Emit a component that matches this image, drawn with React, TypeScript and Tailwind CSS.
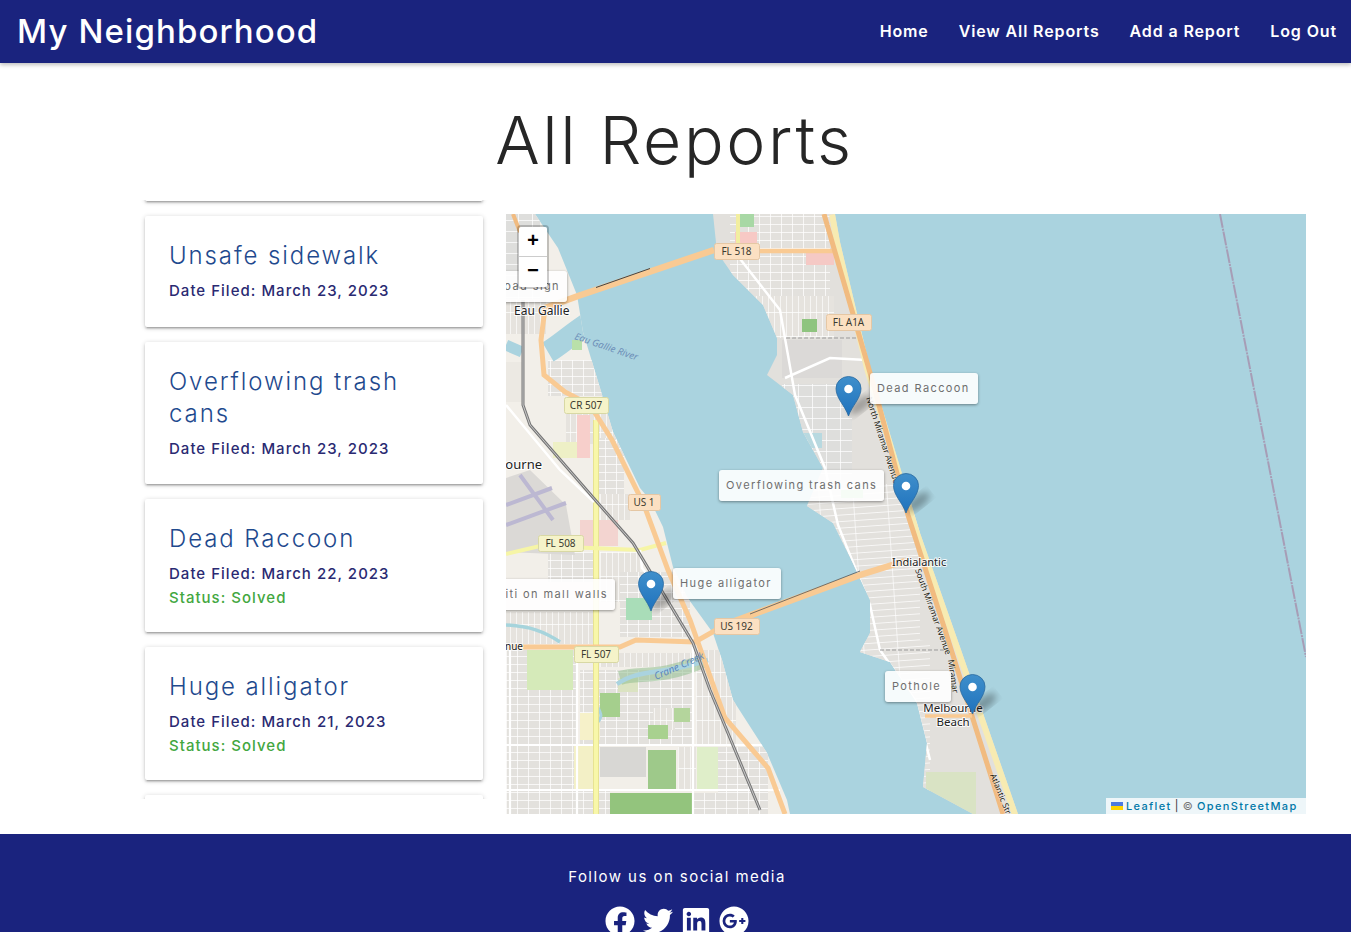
import { FaFacebook, FaTwitter, FaLinkedin, FaGooglePlus } from "react-icons/fa";

const FONT = "font-['Inter','Noto_Sans',sans-serif]";

type Report = { title: string[]; date: string; solved?: boolean };
const reports: Report[] = [
  { title: ["Unsafe sidewalk"], date: "Date Filed: March 23, 2023" },
  { title: ["Overflowing trash", "cans"], date: "Date Filed: March 23, 2023" },
  { title: ["Dead Raccoon"], date: "Date Filed: March 22, 2023", solved: true },
  { title: ["Huge alligator"], date: "Date Filed: March 21, 2023", solved: true },
];

const CARD_SHADOW = "shadow-[0_2px_2px_0_rgba(0,0,0,0.14),0_3px_1px_-2px_rgba(0,0,0,0.12),0_1px_5px_0_rgba(0,0,0,0.2)]";

function Card({ r }: { r: Report }) {
  return (
    <div className={`bg-white rounded-[2px] p-6 ${CARD_SHADOW}`}>
      <div className="text-[24px] leading-[32px] font-light tracking-[1.9px] text-[#1f4a8e]">
        {r.title.map((t) => (
          <div key={t}>{t}</div>
        ))}
      </div>
      <div className="mt-[8px] text-[15px] leading-[22.5px] font-medium tracking-[1.02px] text-[#2a2a72]">{r.date}</div>
      {r.solved && <div className="mt-px -mb-px text-[15px] leading-[22.5px] font-medium tracking-[1.02px] text-[#43a73f]">Status: Solved</div>}
    </div>
  );
}

const mainland = "506,214 535,214 558,248 577,295 583,332 600,388 613,432 640,488 650,500 663,527 673,567 687,597 713,633 722,660 733,700 767,753 787,800 790,814 506,814";
const island = "713,214 717,252 733,275 763,305 777,338 777,355 767,375 793,395 803,432 823,468 807,506 833,523 850,557 870,600 870,633 860,652 890,662 917,703 927,743 923,787 973,814 1018,814 960,647 920,533 870,368 840,242 835,214";
const east = "835,214 840,242 870,368 920,533 960,647 1018,814";

function Shield({ x, y, w, t, yellow }: { x: number; y: number; w: number; t: string; yellow?: boolean }) {
  return (
    <g>
      <rect x={x + 0.5} y={y + 0.5} width={w} height={16} rx={2} fill={yellow ? "#f5f3c9" : "#fbe0c2"} stroke={yellow ? "#d8d8a4" : "#e5c7a4"} />
      <text x={x + w / 2} y={y + 12.2} textAnchor="middle" fontSize={10} fill="#3b3b30" fontFamily="'Noto Sans',sans-serif">{t}</text>
    </g>
  );
}

function Label({ x, y, t, anchor = "start", size = 12 }: { x: number; y: number; t: string; anchor?: "start" | "middle" | "end"; size?: number }) {
  return (
    <text x={x} y={y} textAnchor={anchor} fontSize={size} fill="#222" stroke="#fff" strokeWidth={2} paintOrder="stroke" strokeOpacity={0.85} fontFamily="'Noto Sans',sans-serif">{t}</text>
  );
}

function RoadName({ x, y, a, t }: { x: number; y: number; a: number; t: string }) {
  return (
    <text transform={`translate(${x} ${y}) rotate(${a})`} fontSize={8.4} fill="#201a10" stroke="#fff" strokeWidth={1} strokeOpacity={0.4} paintOrder="stroke" fontFamily="'Noto Sans',sans-serif">{t}</text>
  );
}

function Pin({ x, tip }: { x: number; tip: number }) {
  return (
    <g transform={`translate(${x - 12.5} ${tip - 39.5})`}>
      <path d="M12.5 39.5 C9 29 0 22 0 12 A12.5 12 0 0 1 25 12 C25 22 16 29 12.5 39.5 Z" fill="url(#pin)" stroke="#2a6a9f" strokeWidth={0.8} />
      <circle cx={12.5} cy={12.5} r={4.3} fill="#fff" />
    </g>
  );
}

function Shadow({ x, tip }: { x: number; tip: number }) {
  return <ellipse cx={x + 12} cy={tip - 11} rx={14} ry={6} fill="#000" opacity={0.3} filter="url(#blur)" transform={`rotate(-38 ${x + 12} ${tip - 11})`} />;
}

const Rects = ({ items }: { items: [number, number, number, number, string][] }) => (
  <>
    {items.map(([x, y, w, h, f], i) => (
      <rect key={i} x={x} y={y} width={w} height={h} fill={f} />
    ))}
  </>
);

function MapDrawing() {
  return (
    <svg viewBox="506 214 800 600" className="absolute inset-0 w-full h-full">
      <defs>
        <linearGradient id="pin" x1="0" y1="0" x2="0" y2="1">
          <stop offset="0" stopColor="#3f8fcb" />
          <stop offset="1" stopColor="#1f72bd" />
        </linearGradient>
        <filter id="blur"><feGaussianBlur stdDeviation="3.5" /></filter>
        <pattern id="gridA" width="11" height="8" patternUnits="userSpaceOnUse">
          <rect width="11" height="8" fill="#e3e1dd" />
          <path d="M0 0H11M0 0V8" stroke="#fff" strokeWidth="1.5" />
        </pattern>
        <pattern id="gridB" width="34" height="6.5" patternUnits="userSpaceOnUse" patternTransform="rotate(-4)">
          <rect width="34" height="6.5" fill="#e3e1dd" />
          <path d="M0 0H34M0 0V6.5" stroke="#fff" strokeWidth="1.3" />
        </pattern>
        <pattern id="gridC" width="14" height="11" patternUnits="userSpaceOnUse">
          <rect width="14" height="11" fill="#dededc" />
          <path d="M0 0H14M0 0V11" stroke="#fff" strokeWidth="1.5" />
        </pattern>
        <pattern id="gridD" width="6" height="24" patternUnits="userSpaceOnUse">
          <rect width="6" height="24" fill="#e6e3de" />
          <path d="M0 0H6M0 0V24" stroke="#fff" strokeWidth="1.3" />
        </pattern>
        <clipPath id="mainClip"><polygon points={mainland} /></clipPath>
        <clipPath id="islandClip"><polygon points={island} /></clipPath>
      </defs>

      <rect x="506" y="214" width="800" height="600" fill="#aad3df" />
      <polyline points="1220,214 1306,657" fill="none" stroke="#a79db6" strokeWidth="2" strokeDasharray="14 1 2 1" />

      <polygon points={mainland} fill="#f2efe9" />
      <g clipPath="url(#mainClip)">
        <Rects
          items={[
            [506, 214, 34, 85, "url(#gridC)"],
            [506, 300, 40, 34, "url(#gridD)"],
            [506, 362, 18, 40, "#ece9e3"],
            [548, 360, 56, 36, "url(#gridA)"],
            [566, 414, 50, 30, "url(#gridD)"],
            [577, 415, 13, 43, "#f7cfcb"],
            [553, 442, 24, 16, "#eef0c6"],
            [596, 438, 28, 56, "url(#gridA)"],
            [580, 520, 38, 26, "#f3d4d0"],
            [600, 494, 30, 26, "url(#gridD)"],
            [548, 552, 48, 30, "url(#gridA)"],
            [506, 612, 90, 32, "url(#gridD)"],
            [600, 552, 40, 20, "url(#gridD)"],
            [620, 572, 70, 65, "url(#gridA)"],
            [600, 572, 20, 30, "url(#gridD)"],
            [626, 598, 26, 22, "#a9ddb8"],
            [506, 650, 72, 95, "url(#gridA)"],
            [527, 650, 46, 40, "#d5eab9"],
            [600, 653, 100, 14, "url(#gridD)"],
            [580, 670, 114, 75, "url(#gridA)"],
            [600, 693, 20, 24, "#a5cf8d"],
            [618, 678, 20, 14, "#dbe3c2"],
            [653, 708, 22, 22, "url(#gridD)"],
            [674, 708, 16, 14, "#b4d59c"],
            [648, 725, 20, 14, "#a8d18f"],
            [580, 713, 20, 27, "#f6f1c9"],
            [696, 650, 40, 95, "url(#gridD)"],
            [506, 745, 90, 45, "url(#gridA)"],
            [574, 745, 22, 44, "#f3f0c6"],
            [600, 747, 46, 30, "#d8d7d4"],
            [648, 750, 28, 40, "#9ec98a"],
            [678, 747, 18, 42, "url(#gridD)"],
            [697, 747, 21, 42, "#dfeec9"],
            [718, 747, 50, 70, "url(#gridA)"],
            [506, 790, 104, 24, "url(#gridA)"],
            [610, 793, 84, 21, "#93c47d"],
            [694, 793, 24, 21, "url(#gridA)"],
          ]}
        />
        <path d="M506 478 L530 470 L566 505 L575 555 L506 552 Z" fill="#dbd9d6" />
        <path d="M506 505 L552 488 M506 525 L566 503 M520 475 L553 520" stroke="#bcb8d2" strokeWidth="4" fill="none" />
        <path d="M506 625 C530 626 545 632 560 642" stroke="#a6d4dc" strokeWidth="3.5" fill="none" />
        <path d="M620 678 C640 672 660 680 705 660" stroke="#92c08f" strokeWidth="14" fill="none" opacity="0.55" />
        <path d="M617 684 C640 668 660 676 708 660" stroke="#aad3df" strokeWidth="4.5" fill="none" />
        <path d="M594 700 C600 712 606 716 594 726" stroke="#aad3df" strokeWidth="3" fill="none" />
        <path d="M577 650V814M693 647V814M506 745H770M506 790H780M510 650V814" stroke="#fff" strokeWidth="2.2" fill="none" />
        <path d="M506 345 L522 352" stroke="#aad3df" strokeWidth="11" fill="none" />
        <path d="M590 322 C570 335 560 345 548 352" stroke="#aad3df" strokeWidth="22" fill="none" />
        <rect x="572" y="340" width="10" height="10" fill="#b9e0a9" />
        <polyline points="513,214 520,232" stroke="#f1bb80" strokeWidth="4" fill="none" />
      </g>

      <polygon points={island} fill="#e2e0dc" />
      <g clipPath="url(#islandClip)">
        <Rects
          items={[
            [730, 214, 100, 82, "url(#gridA)"],
            [735, 232, 22, 14, "#f7c9c5"],
            [736, 214, 18, 13, "#a8d8a5"],
            [806, 253, 28, 12, "#f5c9c5"],
            [738, 296, 96, 42, "url(#gridD)"],
            [782, 340, 60, 38, "#dbd9d7"],
            [802, 319, 15, 13, "#8fc47f"],
            [782, 384, 70, 96, "url(#gridC)"],
            [800, 484, 120, 200, "url(#gridB)"],
            [860, 640, 70, 180, "url(#gridB)"],
            [926, 772, 50, 44, "#d9e3c4"],
            [841, 490, 22, 8, "#a8dca8"],
            [788, 433, 34, 15, "#b8d9e0"],
          ]}
        />
        <polyline points="737,255 780,310 795,395 825,468 838,525 870,605 880,650 915,700 930,760" stroke="#fff" strokeWidth="2.5" fill="none" />
        <polyline points="785,378 830,358 866,360" stroke="#fff" strokeWidth="2.5" fill="none" />
        <polyline points="880,650 950,650" stroke="#999" strokeWidth="1" strokeDasharray="4 2" fill="none" />
        <polyline points="786,338 860,338" stroke="#999" strokeWidth="1" strokeDasharray="4 2" fill="none" />
        <polyline points={east} stroke="#f7ebb2" strokeWidth="12" fill="none" />
      </g>

      <polyline points="596,420 596,814" stroke="#e7e393" strokeWidth="6" fill="none" />
      <polyline points="596,420 596,814" stroke="#f8f7a9" strokeWidth="4" fill="none" />
      <polyline points="738,214 738,248" stroke="#f2eea0" strokeWidth="4" fill="none" />
      <polyline points="506,554 540,546 640,550 666,543" stroke="#f6f5a6" strokeWidth="4" fill="none" />
      <polyline points="506,405 560,470 594,502" stroke="#fff" strokeWidth="2.5" fill="none" />
      <polyline points="640,550 642,568 660,590" stroke="#fff" strokeWidth="2.5" fill="none" />
      <polyline points="545,308 541,340 544,375 565,392 590,405 612,440 644,505 668,570 690,620 706,665 725,718 768,768 785,814" stroke="#f9ca93" strokeWidth="5" fill="none" />
      <polyline points="506,647 620,647 636,640 695,642 716,630" stroke="#f9ca93" strokeWidth="5" fill="none" />
      <polyline points="716,628 860,575 905,561" stroke="#f9ca93" strokeWidth="6.5" fill="none" />
      <polyline points="750,618 860,575" stroke="#555" strokeWidth="0.8" fill="none" transform="translate(0 -4)" />
      <polyline points="545,308 578,296 714,250" stroke="#f9ca93" strokeWidth="6.5" fill="none" />
      <polyline points="596,290 650,271" stroke="#444" strokeWidth="1" fill="none" transform="translate(0 -2.5)" />
      <polyline points="758,251 835,251" stroke="#f9ca93" strokeWidth="4.5" fill="none" />
      <polyline points="824,214 875,390 908,515 945,630 972,716 1003,814" stroke="#f1bb80" strokeWidth="5" fill="none" />
      <polyline points="925,716 972,716" stroke="#f9ca93" strokeWidth="3.5" fill="none" />
      <polyline points="523,300 523,405 530,425 597,502 633,543 693,643 710,690 760,810" stroke="#777" strokeWidth="3" fill="none" />
      <polyline points="523,300 523,405 530,425 597,502 633,543 693,643 710,690 760,810" stroke="#ddd" strokeWidth="0.8" fill="none" />

      <text transform="translate(574 339) rotate(19)" fontSize="9.6" fontStyle="italic" fill="#6d8fb8" fontFamily="'Noto Sans',sans-serif">Eau Gallie River</text>
      <text transform="translate(656 680) rotate(-24)" fontSize="10" fontStyle="italic" fill="#5b87bd" fontFamily="'Noto Sans',sans-serif">Crane Creek</text>

      <RoadName x={866} y={398} a={72} t="North Miramar Avenue" />
      <RoadName x={915} y={570} a={70} t="South Miramar Avenue" />
      <RoadName x={948} y={660} a={82} t="Miramar" />
      <RoadName x={990} y={775} a={68} t="Atlantic Street" />

      <Label x={514} y={315} t="Eau Gallie" />
      <Label x={542} y={469} t="Melbourne" anchor="end" size={13} />
      <Label x={892} y={566} t="Indialantic" size={11} />
      <Label x={953} y={712} t="Melbourne" anchor="middle" size={11.5} />
      <Label x={953} y={726} t="Beach" anchor="middle" size={11.5} />
      <Label x={523} y={650} t="Avenue" anchor="end" size={10} />

      <Shield x={714} y={243} w={45} t="FL 518" />
      <Shield x={826} y={314} w={45} t="FL A1A" />
      <Shield x={564} y={397} w={44} t="CR 507" yellow />
      <Shield x={628} y={494} w={32} t="US 1" />
      <Shield x={538} y={535} w={45} t="FL 508" yellow />
      <Shield x={714} y={618} w={45} t="US 192" />
      <Shield x={574} y={646} w={44} t="FL 507" yellow />

      <Shadow x={848.5} tip={416} />
      <Shadow x={906} tip={513} />
      <Shadow x={651} tip={611} />
      <Shadow x={972.5} tip={714} />
      <Pin x={848.5} tip={416} />
      <Pin x={906} tip={513} />
      <Pin x={651} tip={611} />
      <Pin x={972.5} tip={714} />
    </svg>
  );
}

const tips: { t: string; cls: string }[] = [
  { t: "road sign", cls: "left-[-40px] top-[57px] w-[101px] justify-end" },
  { t: "Dead Raccoon", cls: "left-[364px] top-[159px] w-[108px]" },
  { t: "Overflowing trash cans", cls: "left-[213px] top-[256px] w-[165px]" },
  { t: "Huge alligator", cls: "left-[167px] top-[354px] w-[108px]" },
  { t: "Graffiti on mall walls", cls: "left-[-56px] top-[365px] w-[165px] justify-end" },
  { t: "Pothole", cls: "left-[379px] top-[457px] w-[66px]" },
];

export default function App() {
  return (
    <div className={`h-[932px] overflow-hidden bg-white ${FONT}`}>
      <header className="relative z-10 h-[63px] bg-[#1a237e] flex items-center justify-between pl-[17px] pr-[14px] shadow-[0_2px_4px_rgba(0,0,0,0.25)]">
        <div className="text-[33px] font-medium text-white tracking-[1.1px]">My Neighborhood</div>
        <nav className="flex gap-[30px] -mt-[2px] text-[16px] font-semibold text-white tracking-[0.87px]">
          <span>Home</span>
          <span>View All Reports</span>
          <span>Add a Report</span>
          <span>Log Out</span>
        </nav>
      </header>

      <main className="relative h-[771px]">
        <h1 className="pt-[37px] text-center text-[66px] leading-[80px] font-light text-[#262626] tracking-[2.6px] pr-[2px]">All Reports</h1>
        <div className="mt-[20px] flex pl-[137px] pr-[45px] gap-[15px]">
          <div className="w-[354px] h-[599px] overflow-hidden px-[8px]">
            <div className="flex flex-col gap-[15px] -mt-[109.5px]">
              <Card r={{ title: ["Broken road sign"], date: "Date Filed: March 24, 2023" }} />
              {reports.map((r) => (
                <Card key={r.title[0]} r={r} />
              ))}
              <Card r={{ title: ["Pothole"], date: "Date Filed: March 20, 2023" }} />
            </div>
          </div>
          <div className="relative mt-[14px] w-[800px] h-[600px] overflow-hidden">
            <MapDrawing />
            {tips.map((x) => (
              <div key={x.t} className={`absolute h-[31px] flex items-center px-[7px] bg-white/90 rounded-[3px] shadow-[0_1px_3px_rgba(0,0,0,0.4)] text-[11px] tracking-[1.4px] text-[#6e6e6e] whitespace-nowrap ${x.cls}`}>
                {x.t}
              </div>
            ))}
            <div className="absolute left-[11px] top-[11px] w-[32px] rounded-[4px] border-2 border-black/20 bg-clip-padding">
              <div className="h-[30px] bg-white rounded-t-[2px] border-b border-[#ccc] flex items-center justify-center text-[20px] font-bold text-black font-['Liberation_Mono',monospace]">+</div>
              <div className="h-[30px] bg-white rounded-b-[2px] flex items-center justify-center text-[20px] font-bold text-black font-['Liberation_Mono',monospace]">−</div>
            </div>
            <div className="absolute right-0 bottom-0 h-[16px] w-[200px] bg-white/80 flex items-center pl-[5px] text-[11px] leading-none tracking-[1.35px] text-[#333] whitespace-nowrap">
              <svg width="12" height="8" viewBox="0 0 12 8" className="mr-[3px]">
                <rect width="12" height="4" fill="#4C7BE1" />
                <rect y="4" width="12" height="4" fill="#FFD500" />
              </svg>
              <span className="text-[#0078a8] font-medium">Leaflet</span>
              <span className="mx-[3px]">|</span>
              <span className="text-[#777] mr-[3px]">©</span>
              <span className="text-[#0078a8] font-medium">OpenStreetMap</span>
            </div>
          </div>
        </div>
      </main>

      <footer className="h-[200px] bg-[#1a237e] text-white">
        <div className="pt-[33px] text-center text-[15px] leading-[20px] tracking-[1.45px] pl-[3px]">Follow us on social media</div>
        <div className="mt-[19px] flex justify-center items-start gap-[8px] text-[30px] pl-[3px]">
          <FaFacebook />
          <FaTwitter />
          <FaLinkedin />
          <FaGooglePlus />
        </div>
      </footer>
    </div>
  );
}
